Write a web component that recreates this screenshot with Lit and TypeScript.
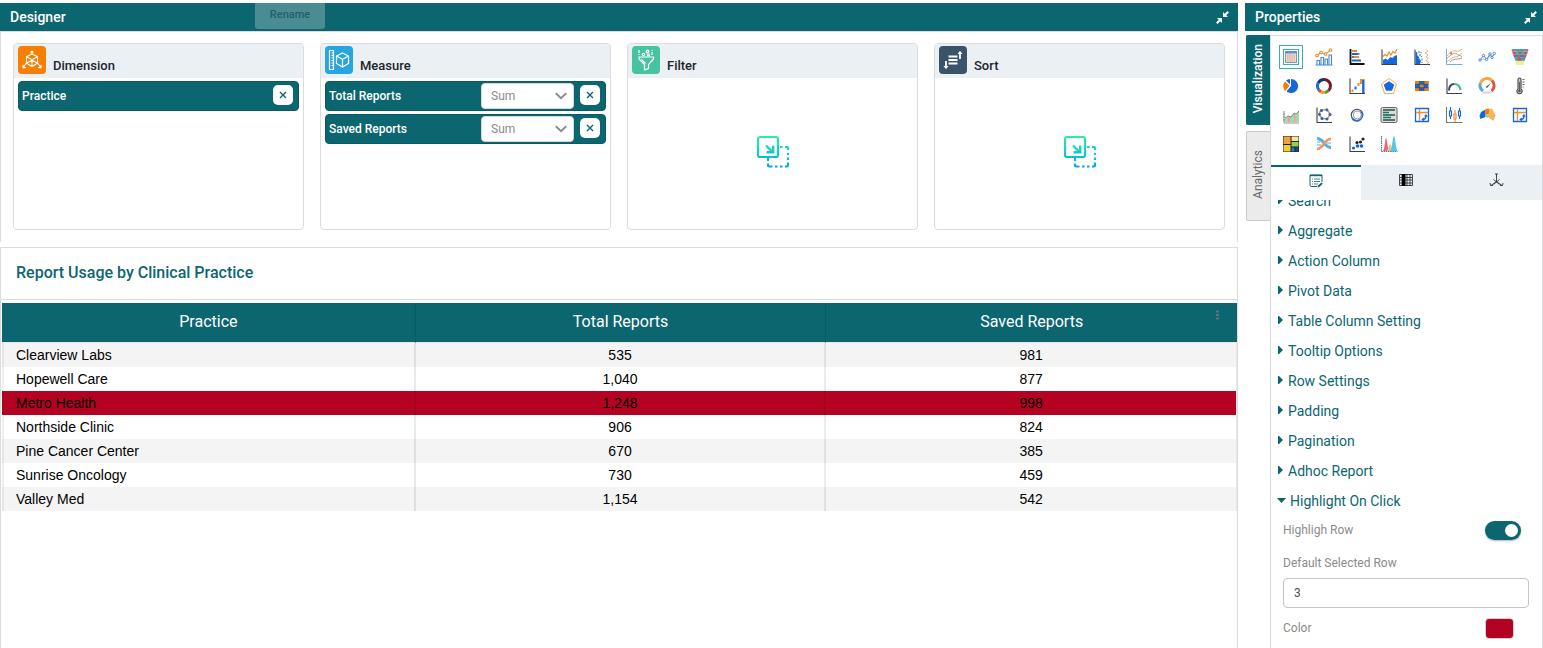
import { LitElement, html, svg, css } from "lit";
import { customElement, state, query } from "lit/decorators.js";
import { classMap } from "lit/directives/class-map.js";

const BLUE = "#1468d8";
const ORANGE = "#f58a2c";
const INK = "#3c4043";

const axis = svg`<path d="M2 1.5V16.5H17" fill="none" stroke=${INK} stroke-width="1.1" />`;

const pivotArt = svg`<path d="M2.500 2.500h13v13h-13z" fill="#fff" stroke=${BLUE} stroke-width="1.300"/><path d="M3 6.500h12M6.500 3v12" stroke=${ORANGE} stroke-width="1.300"/><path d="M9.500 13.500c2.500 0 3.500-1 3.500-4" fill="none" stroke=${BLUE} stroke-width="1.400"/><path d="M11 10.500 13 8l2 2.500zM10.800 11.500 8.300 13.500l2.500 2z" fill=${BLUE}/>`;

const CHARTS = [
  {
    name: "Table",
    art: svg`<rect x="1.500" y="1.500" width="15" height="15" fill="#fff" stroke="#35b3ac" stroke-width="1"/><rect x="3.500" y="3.500" width="11" height="11" fill="#fdebdc" stroke="#6d9ae0"/><path d="M3.500 4.500h11" stroke="#4d84d6" stroke-width="1.800"/><path d="M5.500 6v8M9 6v8M12.500 6v8" stroke="#f8b98a" stroke-width="1.600"/><path d="M7.200 4v10.500M10.800 4v10.500" stroke="#8fb0e2" stroke-width=".8"/>`,
  },
  {
    name: "Bar and line",
    art: svg`<path d="M.5 17h17M2 17v-4.500h2.500V17M6 17V9.500h2.500V17M10 17v-6h2.500v6M14 17V7h2.500v10" fill="none" stroke="#4b88dd" stroke-width="1.100"/><path d="M1.800 7.500 6 4.500l4.500 1.500 5-4" fill="none" stroke=${ORANGE} stroke-width="1.100"/><g fill="#fff" stroke=${ORANGE} stroke-width="1.100"><circle cx="2" cy="7.500" r="1.300"/><circle cx="6" cy="4.500" r="1.300"/><circle cx="10.500" cy="6" r="1.300"/><circle cx="15.500" cy="2" r="1.300"/></g>`,
  },
  {
    name: "Horizontal bar",
    art: svg`<path d="M2.500 1v15h14" fill="none" stroke="#111" stroke-width="1.800"/><path d="M4 3h4M4 9h7" stroke=${ORANGE} stroke-width="2"/><path d="M4 6h6M4 12.500h9" stroke=${BLUE} stroke-width="2"/><path d="M8 3h1M10 6h1.500M4 9h2" stroke="#7a5a70" stroke-width="1.600"/>`,
  },
  {
    name: "Area",
    art: svg`${axis}<path d="M3 16v-4l2.500-1.500 2 1.500 3-3 2 1 2-2 2.500-1V16z" fill=${BLUE}/><path d="m3 8.500 2-2 2 1.500 2-4 2 3 2-3.500L15 5l2-4" fill="none" stroke=${ORANGE} stroke-width="1.200"/>`,
  },
  {
    name: "Vertical area",
    art: svg`${axis}<path d="M2.500 3 4.500 5 4 7l2 2 .5 2 1.500 2-1 3H2.500z" fill=${BLUE}/><path d="M6 3v2M7 6v2M5.500 10v1M8.500 8v1M9 10.500v2M9 14v1M8 4v1" stroke="#4b8be6" stroke-width="1.200"/><path d="m13 1.500 2 2-3 1.500 3 2-2 2 2 1.500-2 2 3 2-2 1.500" fill="none" stroke="#f8aa6a" stroke-width="1"/>`,
  },
  {
    name: "Spline range",
    art: svg`<path d="M1.500 1v15.500H17.500" fill="none" stroke="#7aa9e8" stroke-width="1"/><path d="M2 13.500C6 11 7 9 10 9s4-2 7-4M2 8c3-4 6-6 9-5s3 0 6-2M6 4l1 2" fill="none" stroke="#f8aa6a" stroke-width="1"/><path d="M2 10.500c4-4 7-6 9-5s3 2 6 3M5 14c3-4 8-2 12-4" fill="none" stroke="#7c8795" stroke-width=".8"/><circle cx="6" cy="5" r="1.200" fill=${ORANGE}/>`,
  },
  {
    name: "Line",
    art: svg`<path d="m1.800 12 4-4.500 2.800 4L12 6l2 3.500 2.500-4" fill="none" stroke="#3a80df" stroke-width="1"/><path d="M2 12.500 5 11l4 1 3-4 4-1" fill="none" stroke="#c9a58a" stroke-width=".7"/><g fill="#fff" stroke="#3a80df" stroke-width=".9"><circle cx="2" cy="12" r="1.200"/><circle cx="5.500" cy="7.500" r="1.200"/><circle cx="8.500" cy="11.500" r="1.200"/><circle cx="12" cy="6" r="1.200"/><circle cx="14" cy="9.500" r="1.200"/><circle cx="16.300" cy="5.500" r="1.200"/></g>`,
  },
  {
    name: "Funnel",
    art: svg`<path d="M.5 1h17l-.6 2.700H1.100z" fill="#8b8297"/><path d="M6 1h6v2.700H6z" fill="#3fa9a0"/><path d="M1.300 4h15.400l-.7 2.700H2z" fill="#c9526b"/><path d="M5 4h3v2.700H5zM10 4h3v2.700h-3z" fill="#46b1a2"/><path d="M2.300 7h13.400l-.8 2.700H3.100z" fill="#4c79b8"/><path d="M6 7h3v2.700H6zM12 7h2v2.700h-2z" fill="#ce5468"/><path d="M3.500 10h11l-.8 2.700H4.300z" fill="#4a9f90"/><path d="M7 10h3v2.700H7z" fill="#b35a60"/><path d="M4.700 13h8.600l-.8 4H5.500z" fill="#f0eb9a"/>`,
  },
  {
    name: "Pie",
    art: svg`<path d="M9 9V2a7 7 0 1 1-4.500 12.300z" fill=${BLUE}/><path d="M7.600 8.800 3.200 14A7 7 0 0 1 3 4.500z" fill="#f57c00"/><path d="M8 7.500 4 3.500A7 7 0 0 1 8 2z" fill=${BLUE}/>`,
  },
  {
    name: "Donut",
    art: svg`<g fill="none" stroke-width="3"><path d="M9 2.500A6.500 6.500 0 0 1 15.500 9" stroke="#7c1230"/><path d="M15.500 9a6.500 6.500 0 0 1-2 4.600" stroke="#8c1a33"/><path d="M13.500 13.600A6.500 6.500 0 0 1 9.500 15.500" stroke="#5f9a2e"/><path d="M9.500 15.500a6.500 6.500 0 0 1-3.500-.7" stroke="#f3a21b"/><path d="M6 14.800a6.500 6.500 0 0 1-2.200-2" stroke="#e0412c"/><path d="M3.800 12.800A6.500 6.500 0 0 1 3.200 6" stroke="#1e6fc0"/><path d="M3.200 6A6.500 6.500 0 0 1 9 2.500" stroke="#123c63"/></g>`,
  },
  {
    name: "Waterfall",
    art: svg`${axis}<path d="M4.500 12.500v2.500M10.500 6v3M13 3v4" stroke=${ORANGE} stroke-width="2"/><path d="M7.500 9.500v3" stroke=${BLUE} stroke-width="2"/><path d="M15.300 2.500V16" stroke=${BLUE} stroke-width="2.400"/><path d="M12 2.500h4.500" stroke=${ORANGE} stroke-width="1"/>`,
  },
  {
    name: "Radar",
    art: svg`<path d="m9 1.500 7.500 5.500-3 9.500h-9L1.500 7z" fill="none" stroke="#f8a765" stroke-width="1"/><path d="m9 4.300 5.300 3.500-2.300 6H6L3.700 7.800z" fill=${BLUE}/>`,
  },
  {
    name: "Heat map",
    art: svg`<path d="M2 4h13.500v10H2z" fill=${BLUE}/><path d="M2 4h4.500v3H2zM11 4h4.500v3H11zM6.500 7.300H11v3.300H6.500zM2 11h4.500v3H2zM11 11h4.500v3H11z" fill="#f57c00"/><path d="M6.500 4v10M11 4v10M2 7.300h13.500M2 10.700h13.500" stroke="#274a80" stroke-width=".6"/>`,
  },
  {
    name: "Arc",
    art: svg`${axis}<path d="M4 13.500C4 9 6 7 9.500 7" fill="none" stroke="#3c4663" stroke-width="2"/><path d="M9.500 7c3.500 0 5.500 2.500 6 6" fill="none" stroke="#3dbd8f" stroke-width="2"/>`,
  },
  {
    name: "Gauge",
    art: svg`<g fill="none" stroke-width="3"><path d="M5 14A7 7 0 0 1 2.500 6" stroke="#5aa7dc"/><path d="M2.500 6A7 7 0 0 1 14 3.500" stroke="#f6ab3c"/><path d="M14 3.500a7 7 0 0 1-.5 10.500" stroke="#e2503c"/></g><path d="m7.500 10 5.500-4-4 5z" fill="#4a5560"/><rect x="4.500" y="14.500" width="9" height="2" rx="1" fill="#c9d6e2"/>`,
  },
  {
    name: "Thermometer",
    art: svg`<path d="M7 12V2.500a1.500 1.500 0 0 1 3 0V12a2.600 2.600 0 1 1-3 0z" fill="#ccc" stroke="#444" stroke-width="1.100"/><circle cx="8.500" cy="14" r="1.200" fill="#444"/><path d="M8.500 5v8M11.500 2.500h2M11.500 5h2M11.500 7.500h2M11.500 10h1" stroke="#555" stroke-width=".9"/>`,
  },
  {
    name: "Range area",
    art: svg`<path d="M2 5v12h15M1 8h2M1 11h2M1 14h2" fill="none" stroke="#777" stroke-width=".8"/><path d="M3 16v-4l3-2 3 1 3-4 2 1 3-3v11z" fill="#a5d9ab"/><path d="M6 11v5h2v-5zM12 8v8h1V8z" fill="#f19a9a"/><path d="m3 12 3-2 3 1 3-4 2 1 3-3" fill="none" stroke="#6b7a6f" stroke-width=".8"/>`,
  },
  {
    name: "Polygon scatter",
    art: svg`${axis}<path d="m6 4 6-.5 3.500 5L12 13 7 12.500 4 8z" fill="none" stroke=${ORANGE} stroke-width="1.400"/><g fill=${BLUE}><circle cx="6.500" cy="4.500" r="1.500"/><circle cx="12" cy="4" r="1.400"/><circle cx="15" cy="8.500" r="1.500"/><circle cx="12" cy="13" r="1.500"/><circle cx="7" cy="12.500" r="1.500"/><circle cx="4.500" cy="8.500" r="1.400"/></g>`,
  },
  {
    name: "Ring",
    art: svg`<circle cx="9" cy="9" r="5.700" fill="none" stroke="#4a5667" stroke-width="1.200"/><circle cx="9.300" cy="9" r="4" fill="none" stroke="#8a94a0" stroke-width=".9"/><path d="M4 12a5.500 5.500 0 0 0 8 1.800M13 5a5.500 5.500 0 0 1 1 6" fill="none" stroke="#2d6fc8" stroke-width="1.600"/>`,
  },
  {
    name: "Card",
    art: svg`<rect x="1" y="1.500" width="16" height="15" rx="1.500" fill="#d9dcdc" stroke="#666" stroke-width="1"/><path d="M3 4h12M3 9h12M3 14h12" stroke="#2c4f4a" stroke-width="1.700"/><path d="M3 6.500h6M3 11.500h8" stroke="#0f7d62" stroke-width="1.500"/>`,
  },
  { name: "Pivot", art: pivotArt },
  {
    name: "Candlestick",
    art: svg`<path d="M1.500 1v15.500H17.500" fill="none" stroke="#777" stroke-width="1.100"/><path d="M5.500 1v12M14.500 2v11" stroke=${BLUE} stroke-width="1.100"/><path d="M10 4v12" stroke=${ORANGE} stroke-width="1.100"/><g fill="#fff" stroke-width="1.200"><path d="M4.500 5h2v5h-2zM13.500 5h2v5h-2z" stroke=${BLUE}/><path d="M9 8h2v5H9z" stroke=${ORANGE}/></g>`,
  },
  {
    name: "Map",
    art: svg`<path d="m1.500 10 1.500-4 4.500-2.500V11l-5 2z" fill=${BLUE}/><path d="M7.500 3 11 2.500v5.500l-3.500 1z" fill="#f57c00"/><path d="m11 3 3-.5 1.500 3 2 4-2 5.500-4.500-3z" fill="#f8b65c"/><path d="M7.500 9.500 11 8v3l-2 1z" fill="#9fd08a"/>`,
  },
  { name: "Pivot grid", art: pivotArt },
  {
    name: "Tree map",
    art: svg`<path d="M1 1h16v16H1z" fill="#222"/><path d="M1.500 1.500h7v7.500h-7z" fill="#f8a13c"/><path d="M9.500 1.500h7v4.500h-7z" fill="#fbe39a"/><path d="M9.500 7h7v4.500h-7z" fill="#8ed44e"/><path d="M1.500 10h7v6.500h-7z" fill="#f0cf35"/><path d="M9.500 12.500h3v4h-3z" fill="#1e79d8"/><path d="M13.500 12.500h3v4h-3z" fill="#164a90"/>`,
  },
  {
    name: "Sankey",
    art: svg`<path d="M2 3.500c7 0 7 9 14 9" fill="none" stroke="#4fb5e0" stroke-width="3"/><path d="M2 14C9 13.500 9 4 16 4" fill="none" stroke="#f5915e" stroke-width="2.600"/><path d="M11.500 8H16M2 10h4M2 7h3" stroke="#8ccbe8" stroke-width="1.500"/>`,
  },
  {
    name: "Scatter",
    art: svg`${axis}<g fill=${BLUE}><circle cx="5.500" cy="13" r="1.600"/><circle cx="9.500" cy="11" r="1.800"/><circle cx="13.500" cy="11" r="1.800"/></g><g fill="#222"><circle cx="9" cy="7.500" r="1.600"/><circle cx="12.500" cy="7" r="1.600"/><circle cx="15" cy="4" r="1.600"/></g>`,
  },
  {
    name: "Peaks",
    art: svg`<path d="M1.500 1v15.500H17.500" fill="none" stroke="#4777c4" stroke-width="1.200" stroke-dasharray="1.500 .7"/><path d="M3 16C5 14 5 3 6 3s1.500 11 3.500 13z" fill="#f0607b"/><path d="M6.500 16c2-1 2.500-7 3.500-7s2 6 3.500 7z" fill="#fbc36b"/><path d="M10 16C12.500 13 12.500 1 14 1s1.500 12 3.500 15z" fill="#52c7ea"/>`,
  },
];

const ROWS: [string, string, string][] = [
  ["Clearview Labs", "535", "981"],
  ["Hopewell Care", "1,040", "877"],
  ["Metro Health", "1,248", "998"],
  ["Northside Clinic", "906", "824"],
  ["Pine Cancer Center", "670", "385"],
  ["Sunrise Oncology", "730", "459"],
  ["Valley Med", "1,154", "542"],
];

const SECTIONS = [
  "Search",
  "Aggregate",
  "Action Column",
  "Pivot Data",
  "Table Column Setting",
  "Tooltip Options",
  "Row Settings",
  "Padding",
  "Pagination",
  "Adhoc Report",
];

const shrinkIcon = html`<svg width="13" height="13" viewBox="0 0 13 13" aria-hidden="true">
  <path d="M.8 12.200 4 9M12.200 .8 9 4" stroke="#fff" stroke-width="2" />
  <path d="M1 7h5v5L4.500 10.500 2.500 8.500zM7 1v5h5L10.500 4.500 8.500 2.500z" fill="#fff" />
</svg>`;

const dropIcon = html`<svg width="34" height="34" viewBox="0 0 34 34" aria-hidden="true">
  <defs>
    <linearGradient id="drop" x1="0" y1="0" x2="0" y2="34" gradientUnits="userSpaceOnUse">
      <stop offset="0" stop-color="#2af598" />
      <stop offset="1" stop-color="#009efd" />
    </linearGradient>
  </defs>
  <g fill="none" stroke="url(#drop)" stroke-width="2.200">
    <rect x="2" y="2" width="20" height="20" rx="2" />
    <path d="M10 10.500l6 6M17.200 10.500v6.700h-6.700" stroke-width="2.400" />
    <path d="M24 12h2.500M29 12h2q1 0 1 1v2M32 18v2M32 22.500v2.500M32 27.500v3q0 1-1 1h-2M26.500 31.500h-2.500M21.500 31.500h-2.500M16.500 31.500h-3.500q-1 0-1-1v-2M12 23v3" />
  </g>
</svg>`;

const dimensionArt = svg`<rect width="28" height="28" rx="4" fill="#f77f00"/><g fill="none" stroke="#fff" stroke-width="1.100"><path d="m14 8 5.500 2.700v6.500L14 20.500l-5.500-3.300v-6.500zM8.500 10.700l5.500 3 5.500-3M14 13.500V20.500M14 8V6M8.500 17.200 5.500 20.500M19.500 17.200l3 3.300M8.500 17.200l5.500-3 5.500 3"/></g><g fill="#fff"><circle cx="14" cy="6" r="1.600"/><path d="m4.500 18.500 0 4 4-.5zM23.500 18.500v4l-4-.5z"/></g>`;
const measureArt = svg`<rect width="28" height="28" rx="4" fill="#28a4de"/><g fill="none" stroke="#fff" stroke-width="1.200"><path d="M4.500 4.500h4v19h-4zM6.500 7h2M6.500 9.500h2M6.500 12h2M6.500 14.500h2M6.500 17h2M6.500 19.500h2"/><path d="m17.500 7 6 3v7.500l-6 3.500-6-3.500V10zM11.500 10l6 3.300 6-3.300M17.500 13.500V21"/></g>`;
const filterArt = svg`<rect width="28" height="28" rx="4" fill="#46c4a0"/><g fill="none" stroke="#fff" stroke-width="1.200"><path d="M7 11h14.500v2l-5 5.500v4l-4 1.300v-5.300L7 13z"/><path d="m9.500 13.500 4 4"/><path d="M7 4v3M7 8v1M20 6v3M20 4v1"/><circle cx="15.500" cy="5.500" r="1.300"/><circle cx="11.500" cy="8.500" r="1.200"/><circle cx="16.500" cy="9" r="1"/></g>`;
const sortArt = svg`<rect width="28" height="28" rx="4" fill="#3b5368"/><path d="M9.500 10.500h9M9.500 14h9M9.500 17.500h9" stroke="#fff" stroke-width="1.800"/><path d="M7 15v6M21 13V7" stroke="#fff" stroke-width="1.800"/><path d="m4.500 20 2.500 3.200L9.500 20zM18.500 8 21 4.800 23.500 8z" fill="#fff"/>`;

@customElement("app-root")
export class AppRoot extends LitElement {
  @state() private selectedRow = 3;
  @state() private highlight = true;
  @state() private color = "#b40223";
  @query(".sections") private sections!: HTMLElement;

  static styles = css`
    :host {
      display: grid;
      grid-template-columns: minmax(0, 1fr) 298px;
      column-gap: 7px;
      height: 100vh;
      padding-top: 3px;
      box-sizing: border-box;
      overflow: hidden;
      background: #fff;
      color: #212529;
      font-family: Roboto, "Liberation Sans", sans-serif;
      font-size: 14px;
      --teal: #0c6670;
      --line: #dcdcdf;
      --pale: #eaf0f4;
    }
    * {
      box-sizing: border-box;
    }
    h2,
    h3 {
      margin: 0;
      font-weight: 400;
    }
    button,
    input,
    select {
      font-family: inherit;
      margin: 0;
      padding: 0;
      border: 0;
      background: none;
      cursor: pointer;
    }
    svg {
      display: block;
    }
    .main {
      display: flex;
      flex-direction: column;
      min-width: 0;
    }
    .bar {
      position: relative;
      display: flex;
      align-items: center;
      justify-content: space-between;
      flex: none;
      height: 28px;
      padding: 0 9px 0 10px;
      background: var(--teal);
      color: #fff;
    }
    .bar h2 {
      font-size: 14px;
      line-height: 20px;
      font-weight: 500;
    }
    .side .bar {
      padding-right: 6px;
    }
    .rename {
      position: absolute;
      left: 255px;
      top: 0;
      width: 70px;
      height: 26px;
      padding-bottom: 4px;
      border-radius: 0 0 3px 3px;
      background: #4b8c93;
      color: #1d6269;
      font-size: 11px;
      font-weight: 500;
    }
    .wells {
      display: grid;
      grid-template-columns: repeat(4, minmax(0, 1fr));
      gap: 16px;
      flex: none;
      padding: 11px 12px 12px;
      border: 1px solid var(--line);
      border-bottom: 0;
    }
    .well {
      display: flex;
      flex-direction: column;
      height: 187px;
      border: 1px solid var(--line);
      border-radius: 4px;
      overflow: hidden;
    }
    .well-head {
      display: flex;
      align-items: flex-start;
      gap: 7px;
      flex: none;
      height: 34px;
      padding: 2px 4px;
      background: var(--pale);
    }
    .well-head h3 {
      padding-top: 10px;
      font-size: 13px;
      line-height: 20px;
      font-weight: 500;
    }
    .chips {
      display: flex;
      flex-direction: column;
      gap: 3px;
      padding: 3px 4px;
    }
    .chip {
      display: flex;
      align-items: center;
      gap: 6px;
      height: 30px;
      padding: 0 5px 0 3px;
      border: 1px solid #0a5a63;
      border-radius: 4px;
      background: var(--teal);
      color: #fff;
      font-size: 12px;
      font-weight: 500;
    }
    .chip-name {
      flex: 1;
    }
    .pick {
      display: grid;
      align-items: center;
    }
    .pick > * {
      grid-area: 1 / 1;
    }
    .pick select {
      appearance: none;
      width: 93px;
      height: 26px;
      padding: 0 9px;
      border: 1px solid #d5d8da;
      border-radius: 4px;
      background: #fff;
      color: #8b8b8b;
      font-size: 12px;
    }
    .pick svg {
      justify-self: end;
      margin-right: 7px;
      pointer-events: none;
    }
    .remove {
      display: grid;
      place-items: center;
      width: 20px;
      height: 20px;
      margin-bottom: 2px;
      border-radius: 5px;
      background: #fff;
    }
    .drop {
      flex: 1;
      display: grid;
      place-items: center;
      padding-bottom: 3px;
    }
    .report {
      flex: 1;
      min-height: 0;
      margin-top: 5px;
      border: 1px solid var(--line);
      border-bottom: 0;
    }
    .report h2 {
      height: 52px;
      padding: 0 15px;
      border-bottom: 1px solid var(--line);
      color: var(--teal);
      font-size: 16px;
      line-height: 50px;
      font-weight: 500;
    }
    .table-wrap {
      position: relative;
      padding: 3px 0 0 1px;
    }
    table {
      width: 100%;
      table-layout: fixed;
      border-collapse: separate;
      border-spacing: 0;
    }
    .first-col {
      width: 33.5%;
    }
    th {
      height: 40px;
      padding: 0 0 2px;
      border-right: 1px solid #0a5a63;
      border-bottom: 1px solid #e8e8e8;
      background: var(--teal);
      color: #fff;
      font-size: 16px;
      font-weight: 400;
    }
    th:last-child {
      border-right: 0;
    }
    td {
      height: 24px;
      padding: 0;
      border-right: 2px solid rgba(0, 0, 0, 0.08);
      color: #000;
      font-family: "Liberation Sans", Arial, sans-serif;
      font-size: 14px;
      line-height: 24px;
      text-align: center;
      background-clip: border-box;
    }
    td:first-child {
      padding-left: 12px;
      border-left: 2px solid rgba(0, 0, 0, 0.06);
      text-align: left;
    }
    td:last-child {
      border-right: 1px solid #e8e8e8;
    }
    tr.odd td {
      background-color: #f4f4f4;
    }
    tr.picked td {
      background-color: var(--pick);
    }
    .dots {
      position: absolute;
      right: 17px;
      top: 8px;
      width: 5px;
      height: 14px;
    }
    .side {
      display: flex;
      flex-direction: column;
      min-width: 0;
      min-height: 0;
    }
    .side-body {
      flex: 1;
      display: flex;
      min-height: 0;
      padding: 4px 0 0 1px;
    }
    .rail {
      display: flex;
      flex-direction: column;
      gap: 6px;
      width: 24px;
    }
    .rail button {
      width: 24px;
      height: 90px;
      padding: 0 2px 3px 0;
      border: 1px solid #cbcbcb;
      border-right: 0;
      border-radius: 2px 0 0 2px;
      background: #ecebec;
      color: #6a6a6a;
      font-size: 12px;
      writing-mode: vertical-rl;
    }
    .rail span {
      display: inline-block;
      transform: rotate(180deg);
    }
    .rail .on {
      border-color: var(--teal);
      background: var(--teal);
      color: #fff;
      font-weight: 500;
    }
    .props {
      flex: 1;
      display: flex;
      flex-direction: column;
      min-width: 0;
      border: 1px solid var(--line);
      border-bottom: 0;
    }
    .charts {
      display: grid;
      grid-template-columns: repeat(8, minmax(0, 1fr));
      flex: none;
      padding: 6px 6px 7px 4px;
    }
    .chart {
      display: grid;
      place-items: center;
      height: 29px;
    }
    .chart span {
      display: grid;
      place-items: center;
      width: 24px;
      height: 24px;
      border: 1px solid transparent;
    }
    .chart .on {
      border-color: #35b3ac;
    }
    .tabs {
      display: grid;
      grid-template-columns: repeat(3, 1fr);
      flex: none;
      height: 35px;
      background: var(--pale);
    }
    .tabs button {
      display: grid;
      place-items: center;
      padding-bottom: 8px;
      border-top: 2px solid transparent;
    }
    .tabs .on {
      padding-bottom: 5px;
      border-top-color: var(--teal);
      background: #fff;
    }
    .sections {
      flex: 1;
      min-height: 0;
      overflow-y: auto;
      scrollbar-width: none;
    }
    .section {
      display: flex;
      align-items: center;
      gap: 5px;
      width: 100%;
      height: 30px;
      padding: 0 7px;
      color: var(--teal);
      font-size: 14px;
      line-height: 20px;
      text-align: left;
    }
    .section svg {
      margin-bottom: 2px;
    }
    .section.open {
      padding-left: 6px;
      gap: 4px;
    }
    .fields {
      padding: 0 13px 24px 12px;
      color: #8b8b8b;
      font-size: 12px;
    }
    .field {
      display: flex;
      align-items: center;
      justify-content: space-between;
      height: 28px;
      padding-right: 8px;
    }
    .fields .stacked {
      display: block;
      padding: 9px 0 5px;
      line-height: 20px;
    }
    .number {
      display: block;
      width: 100%;
      height: 30px;
      padding: 0 10px;
      border: 1px solid #c6c6c6;
      border-radius: 4px;
      background: #fff;
      color: #495057;
      font-size: 12px;
      cursor: text;
    }
    .switch {
      appearance: none;
      display: flex;
      align-items: center;
      width: 36px;
      height: 19px;
      padding: 0 3px;
      border-radius: 10px;
      background: #b8b8b8;
      box-shadow: 0 1px 2px rgba(0, 0, 0, 0.3);
    }
    .switch::before {
      content: "";
      width: 13px;
      height: 13px;
      border-radius: 50%;
      background: #fff;
    }
    .switch:checked {
      justify-content: flex-end;
      background: var(--teal);
    }
    .color-row {
      height: 40px;
      padding-right: 15px;
    }
    .swatch {
      appearance: none;
      width: 29px;
      height: 21px;
      border: 1px solid #d0d0d0;
      border-radius: 4px;
      overflow: hidden;
    }
    .swatch::-webkit-color-swatch-wrapper {
      padding: 0;
    }
    .swatch::-webkit-color-swatch {
      border: 0;
    }
  `;

  firstUpdated() {
    this.sections.scrollTop = 14;
  }

  private well(title: string, art: unknown, body: unknown) {
    return html`<section class="well">
      <div class="well-head">
        <svg width="28" height="28" viewBox="0 0 28 28" aria-hidden="true">${art}</svg>
        <h3>${title}</h3>
      </div>
      ${body}
    </section>`;
  }

  private chip(name: string, aggregate: boolean) {
    return html`<div class="chip">
      <span class="chip-name">${name}</span>
      ${aggregate
        ? html`<label class="pick">
            <select aria-label=${name + " aggregate"}>
              <option>Sum</option>
            </select>
            <svg width="12" height="8" viewBox="0 0 12 8" aria-hidden="true">
              <path d="M.8 1.200 6 6.200l5.200-5" fill="none" stroke="#8b8b8b" stroke-width="1.900" />
            </svg>
          </label>`
        : ""}
      <button class="remove" aria-label=${"Remove " + name}>
        <svg width="8" height="8" viewBox="0 0 8 8" aria-hidden="true">
          <path d="m1 1 6 6M7 1 1 7" stroke="#0c6670" stroke-width="1.400" />
        </svg>
      </button>
    </div>`;
  }

  render() {
    return html`
      <main class="main">
        <header class="bar">
          <h2>Designer</h2>
          <button class="rename">Rename</button>
          <button aria-label="Collapse designer">${shrinkIcon}</button>
        </header>
        <div class="wells">
          ${this.well("Dimension", dimensionArt, html`<div class="chips">${this.chip("Practice", false)}</div>`)}
          ${this.well(
            "Measure",
            measureArt,
            html`<div class="chips">${this.chip("Total Reports", true)}${this.chip("Saved Reports", true)}</div>`
          )}
          ${this.well("Filter", filterArt, html`<div class="drop">${dropIcon}</div>`)}
          ${this.well("Sort", sortArt, html`<div class="drop">${dropIcon}</div>`)}
        </div>
        <section class="report">
          <h2>Report Usage by Clinical Practice</h2>
          <div class="table-wrap" style=${`--pick:${this.color}`}>
            <table>
              <colgroup>
                <col class="first-col" />
                <col />
                <col />
              </colgroup>
              <thead>
                <tr>
                  <th>Practice</th>
                  <th>Total Reports</th>
                  <th>Saved Reports</th>
                </tr>
              </thead>
              <tbody>
                ${ROWS.map(
                  (row, i) => html`<tr
                    class=${classMap({ odd: i % 2 === 0, picked: this.highlight && i + 1 === this.selectedRow })}
                    @click=${() => (this.selectedRow = i + 1)}
                  >
                    ${row.map((cell) => html`<td>${cell}</td>`)}
                  </tr>`
                )}
              </tbody>
            </table>
            <button class="dots" aria-label="Table menu">
              <svg width="5" height="14" viewBox="0 0 5 14" aria-hidden="true">
                <path d="M1 3.500h3M1 7h3M1 10.500h3" stroke="#5d7478" stroke-width="2" />
              </svg>
            </button>
          </div>
        </section>
      </main>
      <aside class="side">
        <header class="bar">
          <h2>Properties</h2>
          <button aria-label="Collapse properties">${shrinkIcon}</button>
        </header>
        <div class="side-body">
          <nav class="rail">
            <button class="on"><span>Visualization</span></button>
            <button><span>Analytics</span></button>
          </nav>
          <div class="props">
            <div class="charts">
              ${CHARTS.map(
                (chart, i) => html`<button class="chart" aria-label=${chart.name}>
                  <span class=${classMap({ on: i === 0 })}>
                    <svg width="18" height="18" viewBox="0 0 18 18" aria-hidden="true">${chart.art}</svg>
                  </span>
                </button>`
              )}
            </div>
            <div class="tabs">
              <button class="on" aria-label="Format">
                <svg width="14" height="14" viewBox="0 0 14 14" aria-hidden="true">
                  <path d="M8 12.500H2.500q-1.500 0-1.500-1.500V1h12v7" fill="none" stroke="#0c6670" stroke-width="1" />
                  <path d="M1 1.500h12" stroke="#0c6670" stroke-width="1.400" />
                  <path d="M3 5h1M5 5h6M3 7.500h1M5 7.500h6M3 10h1M5 10h4" stroke="#49868d" stroke-width="1" />
                  <path d="m8.500 13.500 .5-2 3.500-3 1.300 1.300-3.500 3.300z" fill="#0c6670" />
                </svg>
              </button>
              <button aria-label="Columns">
                <svg width="14" height="12" viewBox="0 0 14 12" aria-hidden="true">
                  <path d="M.5.500h13v11H.5zM.5 3.500h13M.5 6h13M.5 9h13M3 0v12M8 0v12M11 0v12" fill="none" stroke="#222" stroke-width=".8" />
                  <path d="M3 0h3.500v12H3z" fill="#000" />
                </svg>
              </button>
              <button aria-label="Axes">
                <svg width="15" height="14" viewBox="0 0 15 14" aria-hidden="true">
                  <path d="M7.500 1v8M7.500 8.500 2 12.500M7.500 8.500 13 12.500M4.500 6.500l6 5M10.500 6.500l-6 5" fill="none" stroke="#333" stroke-width=".9" />
                  <path d="M6 1h3M1 10l.5 2.500H4M14 10l-.5 2.500H11" fill="none" stroke="#333" stroke-width=".9" />
                </svg>
              </button>
            </div>
            <div class="sections">
              ${SECTIONS.map(
                (name) => html`<button class="section" aria-expanded="false">
                  <svg width="5" height="8" viewBox="0 0 5 8" aria-hidden="true"><path d="M0 0h1L5 4 1 8H0z" fill="#0c6670" /></svg>
                  ${name}
                </button>`
              )}
              <button class="section open" aria-expanded="true">
                <svg width="9" height="5" viewBox="0 0 9 5" aria-hidden="true"><path d="M0 0h9L4.500 5z" fill="#0c6670" /></svg>
                Highlight On Click
              </button>
              <div class="fields">
                <div class="field">
                  <label for="highlight">Highligh Row</label>
                  <input
                    id="highlight"
                    class="switch"
                    type="checkbox"
                    role="switch"
                    .checked=${this.highlight}
                    @change=${(e: Event) => (this.highlight = (e.target as HTMLInputElement).checked)}
                  />
                </div>
                <label class="stacked" for="default-row">Default Selected Row</label>
                <input
                  id="default-row"
                  class="number"
                  type="text"
                  inputmode="numeric"
                  .value=${String(this.selectedRow)}
                  @input=${(e: Event) => (this.selectedRow = Number((e.target as HTMLInputElement).value))}
                />
                <div class="field color-row">
                  <label for="row-color">Color</label>
                  <input
                    id="row-color"
                    class="swatch"
                    type="color"
                    .value=${this.color}
                    @input=${(e: Event) => (this.color = (e.target as HTMLInputElement).value)}
                  />
                </div>
              </div>
            </div>
          </div>
        </div>
      </aside>
    `;
  }
}
